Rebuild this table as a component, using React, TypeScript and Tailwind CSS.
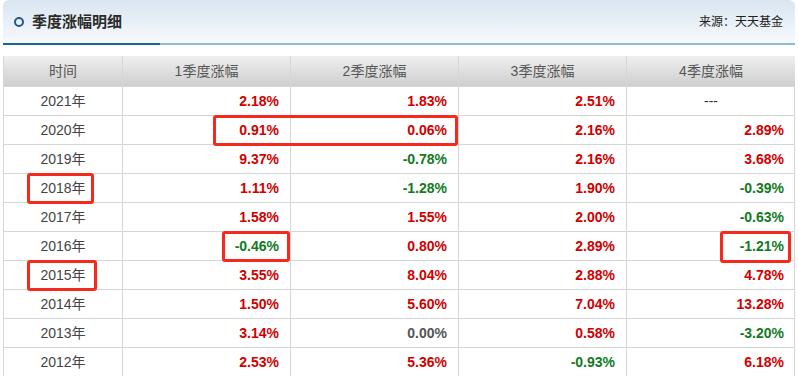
import React from 'react';

type Row = { year: string; q: string[] };

const rows: Row[] = [
  { year: '2021年', q: ['2.18%', '1.83%', '2.51%', '---'] },
  { year: '2020年', q: ['0.91%', '0.06%', '2.16%', '2.89%'] },
  { year: '2019年', q: ['9.37%', '-0.78%', '2.16%', '3.68%'] },
  { year: '2018年', q: ['1.11%', '-1.28%', '1.90%', '-0.39%'] },
  { year: '2017年', q: ['1.58%', '1.55%', '2.00%', '-0.63%'] },
  { year: '2016年', q: ['-0.46%', '0.80%', '2.89%', '-1.21%'] },
  { year: '2015年', q: ['3.55%', '8.04%', '2.88%', '4.78%'] },
  { year: '2014年', q: ['1.50%', '5.60%', '7.04%', '13.28%'] },
  { year: '2013年', q: ['3.14%', '0.00%', '0.58%', '-3.20%'] },
  { year: '2012年', q: ['2.53%', '5.36%', '-0.93%', '6.18%'] },
];

const headers = ['时间', '1季度涨幅', '2季度涨幅', '3季度涨幅', '4季度涨幅'];

function valueClass(v: string) {
  if (v === '---') return 'text-center font-normal text-[#333]';
  if (v.startsWith('-')) return 'text-right font-bold text-[#127a22] pr-[11px]';
  if (v === '0.00%') return 'text-right font-bold text-[#555] pr-[11px]';
  return 'text-right font-bold text-[#d10000] pr-[11px]';
}

// red marker boxes drawn over the table
const marks = [
  'left-[213px] top-[115px] w-[245px] h-[31px]',
  'left-[27px] top-[173px] w-[67px] h-[31px]',
  'left-[222px] top-[231px] w-[68px] h-[31px]',
  'left-[27px] top-[260px] w-[70px] h-[31px]',
  'left-[720px] top-[231px] w-[71px] h-[32px]',
];

export default function App() {
  return (
    <div
      className="relative w-[798px] h-[376px] overflow-hidden bg-white"
      style={{ fontFamily: '"Liberation Sans", Arial, "Noto Sans CJK SC", sans-serif' }}
    >
      <div className="ml-[3px] w-[792px]">
        <div className="h-[43px] rounded-t-[6px] bg-gradient-to-b from-[#d9e5f1] to-[#f7fafd] flex items-center justify-between pl-[11px] pr-[12px] pt-[1px]">
          <div className="flex items-center gap-[8px]">
            <span className="block w-[10px] h-[10px] rounded-full border-2 border-[#1e5b86]" />
            <span className="text-[15px] font-bold text-[#2a2a2a]">季度涨幅明细</span>
          </div>
          <span className="text-[12px] text-[#222]">来源：天天基金</span>
        </div>
        <div className="flex h-[2px]">
          <div className="w-[157px] bg-[#1b6592]" />
          <div className="flex-1 bg-[#8fb9d6]" />
        </div>
      </div>

      <div className="ml-[3px] mt-[11px] w-[792px] grid grid-cols-[119px_168px_168px_168px_169px] border-r border-[#d6d6d6] text-[14px]">
        {headers.map((h) => (
          <div
            key={h}
            className="h-[31px] flex items-center justify-center border-l border-b border-[#d6d6d6] bg-gradient-to-b from-[#efefef] to-[#cfcfcf] text-[#555]"
          >
            {h}
          </div>
        ))}
        {rows.map((r) => (
          <React.Fragment key={r.year}>
            <div className="h-[29px] flex items-center justify-center border-l border-b border-[#d6d6d6] text-[#444]">
              {r.year}
            </div>
            {r.q.map((v, i) => (
              <div
                key={i}
                className={`h-[29px] leading-[28px] border-l border-b border-[#d6d6d6] ${valueClass(v)}`}
              >
                {v}
              </div>
            ))}
          </React.Fragment>
        ))}
      </div>

      {marks.map((m, i) => (
        <div key={i} className={`absolute ${m} border-[3px] border-[#f52a1c] rounded-[3px]`} />
      ))}
    </div>
  );
}
